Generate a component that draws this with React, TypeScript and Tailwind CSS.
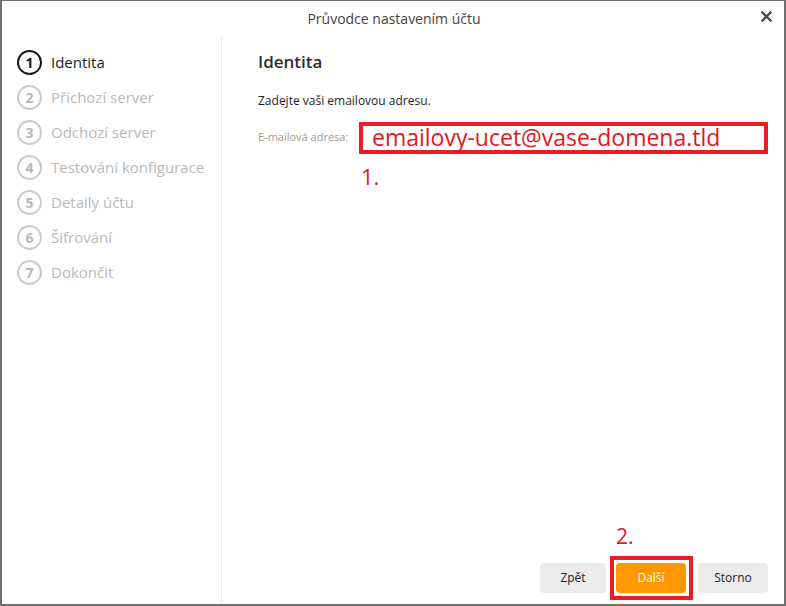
import React from "react";

const steps = [
  "Identita",
  "Příchozí server",
  "Odchozí server",
  "Testování konfigurace",
  "Detaily účtu",
  "Šifrování",
  "Dokončit",
];

function CloseIcon() {
  return (
    <svg width="11" height="11" viewBox="0 0 11 11">
      <path d="M1.5 1.5 L9.5 9.5 M9.5 1.5 L1.5 9.5" stroke="#4a4a4a" strokeWidth="2.4" strokeLinecap="square" />
    </svg>
  );
}

export default function App() {
  return (
    <div
      className="w-[786px] h-[606px] bg-white border-t border-r-2 border-b-2 border-l-2 border-[#707070] flex flex-col overflow-hidden"
      style={{ fontFamily: '"Open Sans", "Noto Sans", sans-serif' }}
    >
      {/* title bar */}
      <div className="h-[34px] shrink-0 flex items-center relative">
        <div className="flex-1 text-center text-[14px] text-[#444] pl-[2px]">Průvodce nastavením účtu</div>
        <div className="absolute right-[12px] top-[10px]">
          <CloseIcon />
        </div>
      </div>

      <div className="flex flex-1 min-h-0">
        {/* steps */}
        <div className="w-[220px] shrink-0 border-r border-[#ebebeb] pt-[10px] pl-[15px]">
          {steps.map((s, i) => {
            const active = i === 0;
            return (
              <div key={s} className="h-[35px] flex items-center">
                <div
                  className={
                    active
                      ? "w-[25px] h-[25px] rounded-full border-2 border-[#1b1b1b] flex items-center justify-center text-[14px] font-bold text-[#1b1b1b]"
                      : "w-[25px] h-[25px] rounded-full border-2 border-[#cacaca] flex items-center justify-center text-[14px] font-bold text-[#b8b8b8]"
                  }
                >
                  {i + 1}
                </div>
                <div className={active ? "ml-[9px] text-[15px] text-[#1b1b1b]" : "ml-[9px] text-[15px] text-[#b9b9b9]"}>
                  {s}
                </div>
              </div>
            );
          })}
        </div>

        {/* content */}
        <div className="flex-1 flex flex-col pl-[36px]">
          <div className="mt-[14px] text-[17px] font-semibold text-[#2e2e2e]">Identita</div>
          <div className="mt-[17px] text-[12px] text-[#1e1e1e]">Zadejte vaši emailovou adresu.</div>
          <div className="mt-[12px] flex items-center">
            <div className="w-[101px] text-[11px] text-[#9a9a9a]">E-mailová adresa:</div>
            <div className="w-[409px] h-[32px] border-4 border-[#ec1c24] flex items-center pl-[9px] text-[23px] text-[#e8141e] leading-none">
              emailovy-ucet@vase-domena.tld
            </div>
          </div>
          <div className="ml-[103px] mt-[11px] text-[22px] text-[#e8141e] leading-none">1.</div>

          <div className="mt-auto flex items-end justify-end pr-[16px] pb-[4px]">
            <button className="w-[66px] h-[30px] mb-[7px] rounded-[4px] bg-[#ebebeb] text-[12px] text-[#222]">Zpět</button>
            <div className="ml-[4px] flex flex-col items-start">
              <div className="ml-[6px] mb-[9px] text-[21px] text-[#e8141e] leading-none">2.</div>
              <div className="border-4 border-[#ec1c24] pt-[3px] pb-[3px] pl-[2px] pr-[3px]">
                <button className="w-[70px] h-[30px] rounded-[4px] bg-[#ff9700] text-[12px] text-white">Další</button>
              </div>
            </div>
            <button className="ml-[5px] w-[70px] h-[30px] mb-[7px] rounded-[4px] bg-[#ebebeb] text-[12px] text-[#222]">Storno</button>
          </div>
        </div>
      </div>
    </div>
  );
}
